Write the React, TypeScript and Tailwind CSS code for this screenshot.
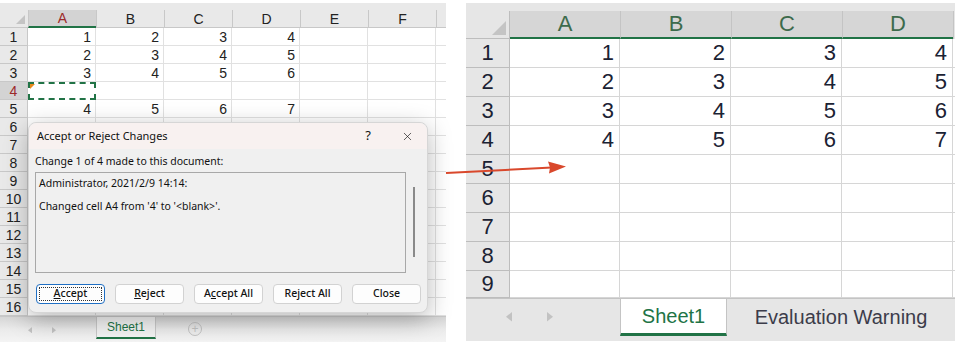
import { X } from 'lucide-react'

const leftCols = ['A', 'B', 'C', 'D', 'E', 'F']
const leftRows: (number | null)[][] = [
  [1, 2, 3, 4],
  [2, 3, 4, 5],
  [3, 4, 5, 6],
  [null, null, null, null],
  [4, 5, 6, 7],
]

const rightCols = ['A', 'B', 'C', 'D']
const rightRows: number[][] = [
  [1, 2, 3, 4],
  [2, 3, 4, 5],
  [3, 4, 5, 6],
  [4, 5, 6, 7],
]

function CornerTriangle({ size }: { size: number }) {
  return (
    <svg width={size} height={size} viewBox="0 0 10 10" className="absolute right-[3px] bottom-[3px]">
      <polygon points="10,0 10,10 0,10" fill="#c4c4c4" />
    </svg>
  )
}

function NavArrows({ gap, size }: { gap: string; size: number }) {
  return (
    <div className={`flex items-center ${gap}`}>
      <svg width={size} height={size * 1.6} viewBox="0 0 5 8">
        <polygon points="5,0 5,8 0,4" fill="#c2c2c2" />
      </svg>
      <svg width={size} height={size * 1.6} viewBox="0 0 5 8">
        <polygon points="0,0 0,8 5,4" fill="#c2c2c2" />
      </svg>
    </div>
  )
}

function LeftSheet() {
  return (
    <div className="relative w-[446px] shrink-0 pt-[3px] font-['Liberation_Sans',Arial,sans-serif] text-[14px] text-[#222]">
      {/* column header */}
      <div className="h-[7px] bg-[#e9e9e9]" />
      <div className="flex h-[18px] bg-[#e9e9e9]">
        <div className="relative w-[28px] border-b border-[#c8c8c8]">
          <CornerTriangle size={9} />
        </div>
        {leftCols.map((c) => (
          <div
            key={c}
            className={
              c === 'A'
                ? 'flex w-[68px] items-center justify-center border-l border-[#c8c8c8] border-b-2 border-b-[#217346] bg-[#d3d3d3] leading-none text-[#9c2a2a]'
                : 'flex w-[68px] items-center justify-center border-l border-b border-[#c8c8c8] leading-none'
            }
          >
            {c}
          </div>
        ))}
        <div className="flex-1 border-l border-b border-[#c8c8c8]" />
      </div>

      {/* rows */}
      {Array.from({ length: 16 }, (_, i) => {
        const n = i + 1
        const data = leftRows[i] ?? []
        return (
          <div key={n} className="flex h-[18px]">
            <div
              className={
                n === 4
                  ? 'flex w-[28px] items-center justify-center border-b border-r border-[#c8c8c8] bg-[#d3d3d3] leading-none text-[#9c2a2a]'
                  : 'flex w-[28px] items-center justify-center border-b border-r border-[#c8c8c8] bg-[#e9e9e9] leading-none'
              }
            >
              {n}
            </div>
            {leftCols.map((c, ci) => {
              const v = data[ci]
              if (n === 4 && c === 'A') {
                return (
                  <div key={c} className="relative w-[68px] border-2 border-dashed border-[#217346] bg-white">
                    <svg width="5" height="5" className="absolute left-0 top-0">
                      <polygon points="0,0 5,0 0,5" fill="#e8891c" />
                    </svg>
                  </div>
                )
              }
              return (
                <div
                  key={c}
                  className="flex w-[68px] items-center justify-end border-b border-r border-[#e1e1e1] pr-[4px] leading-none"
                >
                  {v ?? ''}
                </div>
              )
            })}
            <div className="flex-1 border-b border-[#e1e1e1]" />
          </div>
        )
      })}

      {/* sheet tabs */}
      <div className="flex h-[26px] items-start border-t border-[#c8c8c8] bg-gradient-to-b from-[#d6d6d6] via-[#ebebeb] to-[#f4f4f4]">
        <div className="ml-[28px] mt-[10px]">
          <NavArrows gap="gap-[20px]" size={4} />
        </div>
        <div className="ml-[40px] flex h-[22px] w-[60px] items-center justify-center border-x border-[#c8c8c8] border-b-2 border-b-[#217346] bg-[#f2f2f2] text-[12px] text-[#217346]">
          Sheet1
        </div>
        <div className="ml-[32px] mt-[5px] flex h-[14px] w-[14px] items-center justify-center rounded-full border border-[#c2c2c2] text-[12px] leading-none text-[#c2c2c2]">
          +
        </div>
      </div>

      <Dialog />
    </div>
  )
}

function DlgButton({ children, focused }: { children: React.ReactNode; focused?: boolean }) {
  return (
    <div
      className={
        focused
          ? 'flex h-[20px] w-[69px] items-center justify-center rounded-[4px] border border-[#1f6fc4] bg-[#fdfdfd] p-[2px]'
          : 'flex h-[20px] w-[69px] items-center justify-center rounded-[4px] border border-[#d2d2d2] bg-[#fdfdfd]'
      }
    >
      {focused ? (
        <div className="flex h-full w-full items-center justify-center border border-dotted border-[#333]">{children}</div>
      ) : (
        children
      )}
    </div>
  )
}

function Dialog() {
  return (
    <div className="absolute left-[28px] top-[122px] h-[191px] w-[400px] rounded-[8px] border border-[#d6d6d6] bg-[#f0f0f0] font-['Noto_Sans','Open_Sans',sans-serif] text-[10.5px] text-[#111] shadow-[0_6px_24px_rgba(0,0,0,0.28)]">
      {/* title bar */}
      <div className="flex h-[26px] items-center rounded-t-[8px] bg-[#f8f1f0] pl-[8px] pr-[13px]">
        <span className="text-[11px]">Accept or Reject Changes</span>
        <span className="ml-auto text-[13px]">?</span>
        <X className="ml-[30px]" size={13} strokeWidth={1.2} />
      </div>

      <div className="px-[6px]">
        <div className="mt-[7px] leading-none">Change 1 of 4 made to this document:</div>
        <div className="mt-[5px] flex">
          <div className="h-[101px] w-[371px] border border-[#a8a8a8] bg-[#f0f0f0] px-[3px] pt-[3px]">
            <div>Administrator, 2021/2/9 14:14:</div>
            <div className="mt-[8px]">Changed cell A4 from '4' to '&lt;blank&gt;'.</div>
          </div>
          <div className="ml-[7px] mt-[15px] h-[70px] w-[2px] bg-[#8a8a8a]" />
        </div>

        <div className="mt-[11px] flex gap-[10px] pl-[1px] font-medium">
          <DlgButton focused>
            <span>
              <u>A</u>ccept
            </span>
          </DlgButton>
          <DlgButton>
            <span>
              <u>R</u>eject
            </span>
          </DlgButton>
          <DlgButton>
            <span>
              A<u>c</u>cept All
            </span>
          </DlgButton>
          <DlgButton>
            <span>
              Re<u>j</u>ect All
            </span>
          </DlgButton>
          <DlgButton>
            <span>Close</span>
          </DlgButton>
        </div>
      </div>
    </div>
  )
}

function RightSheet() {
  return (
    <div className="w-[489px] shrink-0 pt-[3px] font-['Liberation_Sans',Arial,sans-serif] text-[22px] text-[#1b2233]">
      <div className="h-[8px] bg-[#e6e6e6]" />
      <div className="flex h-[28px]">
        <div className="relative w-[44px] border-b border-r border-[#bdbdbd] bg-[#e6e6e6]">
          <CornerTriangle size={14} />
        </div>
        {rightCols.map((c, i) => (
          <div
            key={c}
            className={
              i === 0
                ? 'flex w-[110px] items-center justify-center border-b-2 border-b-[#217346] bg-[#d6d6d6] leading-none text-[#3d6b4c]'
                : 'flex w-[111px] items-center justify-center border-l border-[#c4c4c4] border-b-2 border-b-[#217346] bg-[#d6d6d6] leading-none text-[#3d6b4c]'
            }
          >
            {c}
          </div>
        ))}
        <div className="flex-1 border-l border-[#c4c4c4] bg-[#e6e6e6]" />
      </div>

      {Array.from({ length: 9 }, (_, i) => {
        const n = i + 1
        const data = rightRows[i] ?? []
        return (
          <div key={n} className={n === 9 ? 'flex h-[27px]' : 'flex h-[29px]'}>
            <div className="flex w-[44px] items-center justify-center border-b border-r border-[#bdbdbd] bg-[#e6e6e6] leading-none">
              {n}
            </div>
            {rightCols.map((c, ci) => (
              <div
                key={c}
                className={
                  ci === 0
                    ? 'flex w-[110px] items-center justify-end border-b border-r border-[#d6d6d6] pr-[5px] leading-none'
                    : 'flex w-[111px] items-center justify-end border-b border-r border-[#d6d6d6] pr-[5px] leading-none'
                }
              >
                {data[ci] ?? ''}
              </div>
            ))}
            <div className="flex-1 border-b border-[#d6d6d6]" />
          </div>
        )
      })}

      {/* sheet tabs */}
      <div className="flex h-[43px] items-start border-t border-[#c4c4c4] bg-[#e6e6e6] text-[20px]">
        <div className="ml-[40px] mt-[13px]">
          <NavArrows gap="gap-[35px]" size={6} />
        </div>
        <div className="ml-[67px] flex h-[37px] w-[107px] items-center justify-center border-x border-[#c4c4c4] border-b-[3px] border-b-[#217346] bg-white text-[#217346]">
          Sheet1
        </div>
        <div className="flex h-[36px] flex-1 items-center justify-center text-[#3c3c4a]">Evaluation Warning</div>
      </div>
    </div>
  )
}

export default function App() {
  return (
    <div className="relative flex h-[342px] w-[955px] overflow-hidden bg-white">
      <LeftSheet />
      <div className="w-[20px] shrink-0" />
      <RightSheet />

      {/* pointer arrow */}
      <svg width="135" height="24" viewBox="0 0 135 24" className="absolute left-[440px] top-[158px]">
        <line x1="6" y1="15" x2="112" y2="9.5" stroke="#d9482c" strokeWidth="2" />
        <polygon points="126,8.6 108,3.5 110,9.6 109,15.6" fill="#d9482c" />
      </svg>
    </div>
  )
}
